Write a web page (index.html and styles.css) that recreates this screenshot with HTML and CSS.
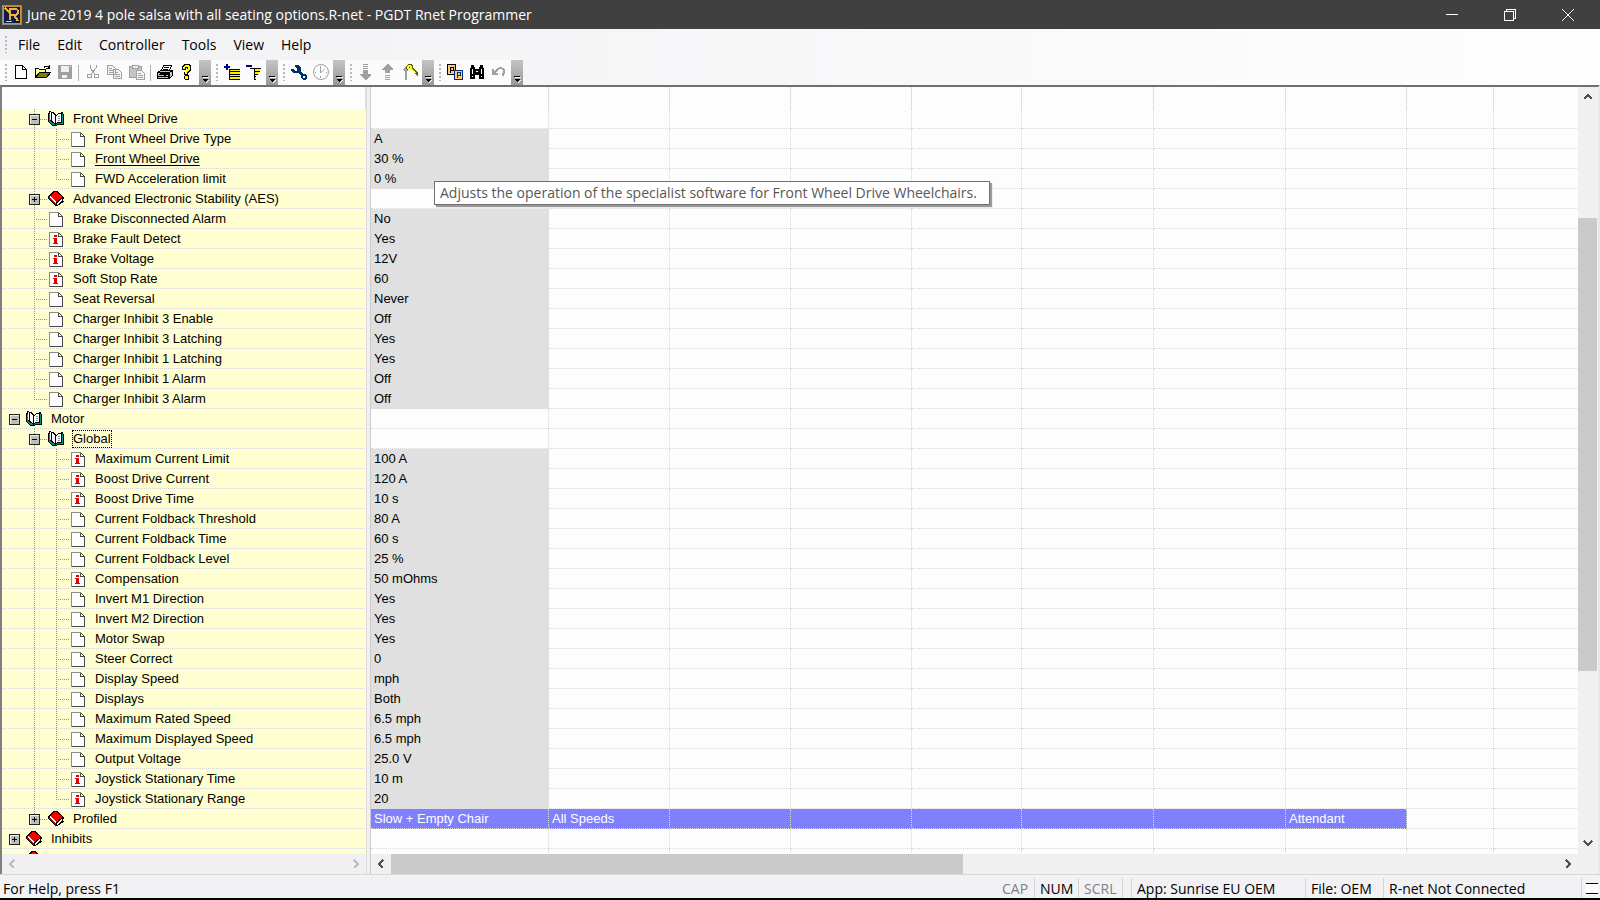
FILE: index.html
```html
<!DOCTYPE html>
<html lang="en">
<head>
  <meta charset="UTF-8" />
  <meta name="viewport" content="width=device-width, initial-scale=1.0"/>
  <title>PGDT Rnet Programmer</title>
  <link rel="stylesheet" href="styles.css">
</head>
<body>
  <!-- shared icons -->
  <svg class="sprite" width="0" height="0">
    <symbol id="i-page" viewBox="0 0 16 16">
      <path d="M1 1h10v1h1v1h1v1h1v1h1v11H1z" fill="#484848"/>
      <path d="M1 1h10v1H2v14H1z" fill="#8c8c8c"/>
      <path d="M2 2h8v4h4v9H2z" fill="#fdfdfd"/>
      <path d="M11 3h1v1h1v1h-2z" fill="#fdfdfd"/>
    </symbol>
    <symbol id="i-info" viewBox="0 0 16 16">
      <use href="#i-page"/>
      <path d="M6 4h3v2H6zM5 7h4v5h1v1H5v-1h1V8H5z" fill="#e00000"/>
    </symbol>
    <symbol id="i-book" viewBox="0 0 16 16">
      <path d="M6 0h3l7 6v1l-1 1v2h1v1l-7 4H7L0 8V5l1-1z" fill="#000"/>
      <path d="M7 1h1l7 5-7 5-6-6z" fill="#f00"/>
      <path d="M1 6l7 6v2L1 8z" fill="#b00000"/>
      <path d="M1 6l7 6v-1L2 5z" fill="#fff"/>
      <path d="M9 12l5-4v2l-5 4z" fill="#fff"/>
    </symbol>
    <symbol id="i-open" viewBox="0 0 16 16">
      <path d="M0 2h1V0h2v1h2l2 2 1 1 2-2h3V1h2v2h1v11H9l-1 1H5l-3-2-2-2z" fill="#000"/>
      <path d="M1 3v8l4 3h3l-6-4V3zM14 3h1v10H9l-1 1v-1l2-1h4z" fill="#009090"/>
      <path d="M2 1l4 2 1 2v7l-3-2-2-1z" fill="#fff"/>
      <path d="M8 5l2-2h3v8h-3l-2 1z" fill="#fff"/>
      <path d="M3 2l1 1v7H3z" fill="#000"/>
      <path d="M10 5h2v1h-2zM10 7h2v1h-2zM10 9h2v1h-2z" fill="#888"/>
    </symbol>
    <symbol id="i-minus" viewBox="0 0 11 11">
      <path d="M0 0h11v11H0z" fill="#222"/><path d="M1 1h9v9H1z" fill="#eee"/><path d="M2 2h8v8H2z" fill="#bdbdbd"/><path d="M3 5h5v1H3z" fill="#000"/>
    </symbol>
    <symbol id="i-plus" viewBox="0 0 11 11">
      <use href="#i-minus"/><path d="M5 3h1v5H5z" fill="#000"/>
    </symbol>
    <symbol id="i-chev" viewBox="0 0 12 12">
      <path d="M2 8l4-4 4 4" fill="none" stroke="currentColor" stroke-width="2"/>
    </symbol>
    <symbol id="i-more" viewBox="0 0 12 25">
      <path d="M3 16h6v1H3z" fill="#000"/><path d="M4 17h6v1H4z" fill="#fff"/>
      <path d="M3 19h6l-3 3z" fill="#000"/><path d="M7 22l3-3v1l-3 3z" fill="#fff"/>
    </symbol>
  </svg>

  <header class="titlebar">
    <svg class="logo" width="20" height="20" viewBox="0 0 20 20">
      <path d="M0 0h20v20H0z" fill="#8c8c84"/><path d="M1 1h18v18H1z" fill="#c89040"/><path d="M2 2h16v16H2z" fill="#101c48"/>
      <path d="M8 15V4h5q3 0 3 3t-3 3H8m4 0l4 6" fill="none" stroke="#f0b040" stroke-width="2"/>
      <path d="M3 3l5 5" fill="none" stroke="#f0b040" stroke-width="2"/>
      <path d="M4 16h6v1H4z" fill="#ccc"/>
    </svg>
    <h1>June 2019 4 pole salsa with all seating options.R-net - PGDT Rnet Programmer</h1>
    <div class="window-buttons">
      <button aria-label="Minimize"><svg width="12" height="12"><path d="M0 5h12v1H0z" fill="#fff"/></svg></button>
      <button aria-label="Restore"><svg width="12" height="12" fill="none" stroke="#fff"><path d="M.5 2.500h9v9h-9zM2.500 2V.5h9v9H10"/></svg></button>
      <button aria-label="Close"><svg class="smooth" width="12" height="12" stroke="#fff"><path d="M0 0l12 12M12 0L0 12"/></svg></button>
    </div>
  </header>

  <div class="bars">
    <nav class="menubar">
      <span class="grip"></span>
      <button>File</button>
      <button>Edit</button>
      <button>Controller</button>
      <button>Tools</button>
      <button>View</button>
      <button>Help</button>
    </nav>

    <div class="toolbars">
      <div class="toolbar">
        <span class="grip"></span>
        <button class="tool" aria-label="New"><svg viewBox="0 0 16 16"><path d="M2.500 1.500h7l4 4v9h-11z" fill="#fff" stroke="#000"/><path d="M9.500 1.500v4h4" fill="none" stroke="#000"/></svg></button>
        <button class="tool" aria-label="Open"><svg viewBox="0 0 16 16"><path d="M.5 13.500v-9h3l1 1h6v3" fill="#ffff90" stroke="#000"/><path d="M.5 13.500l4-5h11l-4 5z" fill="#808000" stroke="#000"/><path d="M9 3.500q2-3 5 0M14.500 1v3.500H11" fill="none" stroke="#000"/></svg></button>
        <button class="tool" aria-label="Save"><svg viewBox="0 0 16 16"><path d="M1 1h14v14H1z" fill="#a0a0a0"/><path d="M4 2h8v6H4zM5 11h5v3H5z" fill="#f0f0f0"/><path d="M13 2h1v1h-1z" fill="#fff"/></svg></button>
        <span class="sep"></span>
        <button class="tool" aria-label="Cut"><svg viewBox="0 0 16 16" fill="none" stroke="#a0a0a0"><path d="M5 1v3l5 6M11 1v3L6 10"/><circle cx="4.500" cy="12" r="2"/><circle cx="11.500" cy="12" r="2"/></svg></button>
        <button class="tool" aria-label="Copy"><svg viewBox="0 0 16 16" fill="#f4f4f4" stroke="#a0a0a0"><path d="M.5 1.500h5l3 3v6h-8zM6.500 5.500h5l3 3v6h-8z"/><path d="M2 4.500h3M2 6.500h4M2 8.500h4M8 8.500h3M8 10.500h5M8 12.500h5"/></svg></button>
        <button class="tool" aria-label="Paste"><svg viewBox="0 0 16 16" stroke="#a0a0a0"><path d="M.5 2.500h12v11H.5z" fill="#c4c4c4"/><path d="M3.500 1.500h6v3h-6z" fill="#eee"/><path d="M7.500 6.500h5l3 3v6h-8z" fill="#f4f4f4"/><path d="M9 9.500h3M9 11.500h5M9 13.500h5"/></svg></button>
        <span class="sep"></span>
        <button class="tool" aria-label="Print"><svg viewBox="0 0 16 16" stroke="#000"><path d="M4.500 6.500l2-5h8l-2 5z" fill="#fff"/><path d="M7 3.500h5M6 5.500h5"/><path d="M.5 8.500l3-2h12v5l-3 3H.5z" fill="#c0c0c0"/><path d="M.5 8.500h12v6M12.500 8.500l3-2M1 12.500h11M2 10.500h8"/><path d="M9 11h2" stroke="#e0d000"/></svg></button>
        <button class="tool" aria-label="Help"><svg viewBox="0 0 16 16"><path d="M3 2l2-2h5l2 2v4l-3 3v2H5V8l3-3V4H7v2H3z" fill="#000"/><path d="M5 12l1-1h3l1 1v3l-1 1H6l-1-1z" fill="#000"/><path d="M4 3l2-2h3l2 2v2L8 8v2H6V7l3-3V3H6v2H4zM6 12h3v3H6z" fill="#ffff00"/></svg></button>
        <button class="more" aria-label="Toolbar options"><svg width="12" height="25"><use href="#i-more"/></svg></button>
      </div>
      <div class="toolbar">
        <span class="grip"></span>
        <button class="tool" aria-label="Add"><svg viewBox="0 0 16 16"><path d="M2 0h2v6H2zM0 2h6v2H0z" fill="#000080"/><path d="M5 5h1v11H5zM5 5h11v1H5zM5 7h11v1H5zM5 10h11v1H5zM5 12h11v1H5zM5 15h11v1H5z" fill="#000"/><path d="M6 6h10v1H6zM6 8h10v2H6zM6 11h10v1H6zM6 13h10v2H6z" fill="#f8f000"/></svg></button>
        <button class="tool" aria-label="Remove"><svg viewBox="0 0 16 16"><path d="M0 1h6v2H0z" fill="#000080"/><path d="M4 4h11v1h-1v3h-2v3h-2v5H8V5H4z" fill="#000"/><path d="M9 5h5v2H9zM9 8h4v2H9zM9 11h2v1H9zM9 13h1v2H9z" fill="#f8f000"/></svg></button>
        <button class="more" aria-label="Toolbar options"><svg width="12" height="25"><use href="#i-more"/></svg></button>
      </div>
      <div class="toolbar">
        <span class="grip"></span>
        <button class="tool" aria-label="Configure"><svg viewBox="0 0 16 16"><path d="M4 1h3l3 3v4l2 2h2l2 2v2l-2 2h-2l-2-2v-2L7 9H3L0 7V5h2l2 2h2V5L4 3z" fill="#003068"/><path d="M12 12h2v2h-2z" fill="#fff"/></svg></button>
        <button class="tool" aria-label="History"><svg class="smooth" viewBox="0 0 16 16" fill="none" stroke="#a0a0a0"><circle cx="8" cy="8" r="7.500"/><path d="M7.500 2v7l4-4M7.500 14v-2M2 8.500h1M13 8.500h1"/></svg></button>
        <button class="more" aria-label="Toolbar options"><svg width="12" height="25"><use href="#i-more"/></svg></button>
      </div>
      <div class="toolbar">
        <span class="grip"></span>
        <button class="tool" aria-label="Read"><svg viewBox="0 0 16 16" fill="#a0a0a0"><path d="M5 0h5v1H5zM5 2h5v1H5zM5 4h5v1H5zM5 6h5v4h3v1l-5 5H7l-5-5v-1h3z"/></svg></button>
        <button class="tool" aria-label="Write"><svg viewBox="0 0 16 16" fill="#a0a0a0"><path d="M5 15h5v1H5zM5 13h5v1H5zM5 11h5v1H5zM5 9h5V6h3V5L8 0H7L2 5v1h3z"/></svg></button>
        <button class="tool" aria-label="Access key"><svg viewBox="0 0 16 16"><path d="M1 5l3-3h3v3L5 8v8H3V8z" fill="#a0a0a0"/><path d="M4 2l2-2h4l1 2v2l5 5v3h-1l-2-3-4-3H6L4 5z" fill="#606000"/><path d="M5 2l1-1h3l1 2v1l4 5h-1L9 6H6L5 4z" fill="#ffff20"/><path d="M7 3h1v1H7z" fill="#444"/></svg></button>
        <button class="more" aria-label="Toolbar options"><svg width="12" height="25"><use href="#i-more"/></svg></button>
      </div>
      <div class="toolbar">
        <span class="grip"></span>
        <button class="tool" aria-label="Parameters"><svg viewBox="0 0 16 16"><path d="M.5 .5h8v10h-8z" fill="#ffc878" stroke="#000"/><path d="M3.500 9V3.500h3v3h-3" fill="none" stroke="#000"/><path d="M7.500 6.500h8v9h-8z" fill="#ffc878" stroke="#003070"/><path d="M10.500 14V8.500h3v3h-3" fill="none" stroke="#003070"/></svg></button>
        <button class="tool" aria-label="Find"><svg viewBox="0 0 16 16"><path d="M2 1h3v2h1v2h4V3h1V1h3v3h1v11h-5v-4H6v4H1V4h1z" fill="#000"/><path d="M3 5h1v5H3zM12 5h1v5h-1zM7 7h2v1H7zM3 12h1v1H3zM12 12h1v1h-1z" fill="#fff"/></svg></button>
        <button class="tool" aria-label="Undo"><svg viewBox="0 0 16 16" fill="none" stroke="#a0a0a0" stroke-width="2"><path d="M2 5v5h5M3 9l4-4q4-2 6 1 1 3-2 6"/></svg></button>
        <button class="more" aria-label="Toolbar options"><svg width="12" height="25"><use href="#i-more"/></svg></button>
      </div>
    </div>
  </div>

  <main class="workspace">
    <section class="tree-pane">
      <div class="tree-head"></div>
      <ul class="tree" id="tree"></ul>
      <div class="hscroll disabled">
        <button aria-label="Scroll left"><svg class="left" width="12" height="12"><use href="#i-chev"/></svg></button>
        <span class="after"></span>
        <button aria-label="Scroll right"><svg class="right" width="12" height="12"><use href="#i-chev"/></svg></button>
      </div>
    </section>
    <div class="splitter"></div>
    <section class="grid-pane">
      <div class="grid-wrap">
        <table class="grid">
          <colgroup>
            <col class="c-value"><col class="c-std"><col class="c-std"><col class="c-std"><col class="c-small"><col class="c-wide"><col class="c-wide"><col class="c-std"><col class="c-thin"><col>
          </colgroup>
          <thead>
            <tr><th></th><th></th><th></th><th></th><th></th><th></th><th></th><th></th><th></th><th></th></tr>
          </thead>
          <tbody id="values"></tbody>
        </table>
      </div>
      <div class="hscroll">
        <button aria-label="Scroll left"><svg class="left" width="12" height="12"><use href="#i-chev"/></svg></button>
        <span class="thumb"></span>
        <span class="after"></span>
        <button aria-label="Scroll right"><svg class="right" width="12" height="12"><use href="#i-chev"/></svg></button>
      </div>
    </section>
    <div class="vscroll">
      <button aria-label="Scroll up"><svg width="12" height="12"><use href="#i-chev"/></svg></button>
      <span class="before"></span>
      <span class="thumb"></span>
      <span class="after"></span>
      <button aria-label="Scroll down"><svg class="down" width="12" height="12"><use href="#i-chev"/></svg></button>
    </div>
    <div class="tooltip" role="tooltip">Adjusts the operation of the specialist software for Front Wheel Drive Wheelchairs.</div>
  </main>

  <footer class="statusbar">
    <span class="message">For Help, press F1</span>
    <span class="key caps off">CAP</span>
    <span class="key">NUM</span>
    <span class="key off">SCRL</span>
    <span class="blank"></span>
    <span class="app">App: Sunrise EU OEM</span>
    <span class="file">File: OEM</span>
    <span class="link">R-net Not Connected</span>
    <svg class="size-grip" width="12" height="12"><path d="M0 0h12v12H0z" fill="#fdfdfd"/><path d="M0 0h12v1H0zM0 10h12v1H0z" fill="#000"/></svg>
  </footer>

  <script src="script.js"></script>
</body>
</html>
```
FILE: styles.css
```css
* {
  box-sizing: border-box;
}

body {
  font-family: "Open Sans", "Noto Sans", sans-serif;
  font-size: 14px;
  margin: 0;
  height: 100vh;
  display: flex;
  flex-direction: column;
  overflow: hidden;
  background: #f2f2f4;
  color: #000;
  border-bottom: 2px solid #000;
}

button {
  font: inherit;
  color: inherit;
  background: none;
  border: none;
  padding: 0;
}

svg {
  display: block;
  flex: none;
  shape-rendering: crispEdges;
}

.smooth {
  shape-rendering: auto;
}

.sprite {
  position: absolute;
}

/* Title bar */
.titlebar {
  display: flex;
  align-items: center;
  height: 29px;
  padding-left: 2px;
  background: #404040;
  color: #fff;
}

.titlebar h1 {
  flex: 1;
  margin: 0 0 0 5px;
  font-size: 14px;
  font-weight: normal;
}

.window-buttons {
  display: flex;
}

.window-buttons button {
  display: flex;
  justify-content: center;
  width: 58px;
  padding-right: 6px;
}

/* Menu and toolbars */
.bars {
  background: linear-gradient(to right, #f1f1f4, #fdfdfd 92%);
}

.menubar {
  display: flex;
  align-items: center;
  height: 31px;
}

.menubar button {
  margin-right: 17px;
}

.grip {
  width: 2px;
  height: 17px;
  margin: 0 3px 0 5px;
  background: repeating-linear-gradient(#b8b8b8 0 2px, transparent 2px 4px);
}

.menubar .grip {
  margin-right: 11px;
}

.toolbars {
  display: flex;
  height: 25px;
}

.toolbar {
  display: flex;
  align-items: center;
  background: #fbfbfc;
}

.tool {
  display: flex;
  justify-content: center;
  width: 22px;
  padding-bottom: 2px;
}

.tool svg {
  width: 16px;
  height: 16px;
}

.sep {
  width: 1px;
  height: 16px;
  margin: 0 3px 0 2px;
  background: #b0b0b0;
}

.more {
  height: 25px;
  margin-left: 1px;
  background: linear-gradient(#c4c4c4, #989898);
}

/* Workspace */
.workspace {
  position: relative;
  flex: 1;
  min-height: 0;
  display: flex;
  border-top: 2px solid #707070;
  border-left: 2px solid #808080;
  border-right: 2px solid #e8e8e8;
  font-family: "Liberation Sans", Arial, sans-serif;
  font-size: 13px;
}

.tree-pane {
  display: flex;
  flex-direction: column;
  width: 364px;
}

.tree-head {
  height: 22px;
  background: #fdfdfd;
  border-right: 1px solid #ddd;
}

.tree {
  flex: 1;
  min-height: 0;
  overflow: hidden;
  margin: 0;
  padding: 0;
  list-style: none;
  background: #fefed0;
}

.tree li {
  display: flex;
  align-items: center;
  height: 20px;
  background: repeating-linear-gradient(to right, #d4d4d4 0 1px, transparent 1px 2px) 0 19px / 100% 1px no-repeat;
}

.tree .label {
  margin-left: 9px;
  line-height: 20px;
}

.tree .hot {
  text-decoration: underline;
  text-underline-offset: 2px;
}

.tree .focused {
  margin-left: 8px;
  line-height: 16px;
  border: 1px dotted #000;
}

/* dotted guide lines in front of a row */
.slot {
  display: flex;
  align-items: center;
  width: 22px;
  height: 20px;
  padding-left: 6px;
  background-repeat: no-repeat;
  background-position: 11px 0, 11px 10px;
}

.slot:first-child {
  width: 21px;
  padding-left: 7px;
}

.slot.joint {
  width: 25px;
}

.slot.joint:first-child {
  width: 24px;
}

.slot.line {
  background-image: repeating-linear-gradient(#909090 0 1px, transparent 1px 2px);
  background-size: 1px 20px;
}

.slot.tee,
.slot.end {
  background-image:
    repeating-linear-gradient(#909090 0 1px, transparent 1px 2px),
    repeating-linear-gradient(to right, #909090 0 1px, transparent 1px 2px);
  background-size: 1px 20px, 14px 1px;
}

.slot.end {
  background-size: 1px 10px, 14px 1px;
}

.splitter {
  width: 5px;
  background: #f0f0f0;
  border-left: 1px solid #ddd;
  border-right: 1px solid #ccc;
}

/* Value grid */
.grid-pane {
  flex: 1;
  min-width: 0;
  display: flex;
  flex-direction: column;
}

.grid-wrap {
  flex: 1;
  min-height: 0;
  overflow: hidden;
  background: #fdfdfd;
}

.grid {
  width: 100%;
  table-layout: fixed;
  border-collapse: separate;
  border-spacing: 0;
}

.c-value { width: 178px; }
.c-std { width: 121px; }
.c-small { width: 110px; }
.c-wide { width: 132px; }
.c-thin { width: 87px; }

.grid th {
  height: 22px;
  padding: 0;
  border-right: 1px solid #ddd;
}

.grid td {
  height: 20px;
  padding: 1px 0 0 3px;
  line-height: 18px;
  white-space: nowrap;
  border-right: 1px dotted #d8d8d8;
  border-bottom: 1px dotted #d8d8d8;
}

.grid th:last-child,
.grid td:last-child {
  border-right: none;
}

.grid td.value {
  background: #e0e0e0;
  border-color: #e0e0e0;
}

.grid td.mode {
  background: #8080ff;
  color: #fff;
}

/* Scroll bars */
.hscroll,
.vscroll {
  display: flex;
  background: #f0f0f2;
  color: #505050;
}

.hscroll {
  height: 20px;
}

.vscroll {
  flex-direction: column;
  width: 20px;
  padding-bottom: 21px;
}

.hscroll button,
.vscroll button {
  display: flex;
  align-items: center;
  justify-content: center;
  width: 20px;
  height: 20px;
}

.disabled {
  color: #bbb;
}

.thumb {
  background: #cacaca;
}

.hscroll .thumb { flex: 49; }
.hscroll .after { flex: 51; }
.vscroll .before { flex: 111; }
.vscroll .thumb { flex: 454; margin-right: 1px; }
.vscroll .after { flex: 162; }

.left { transform: rotate(-90deg); }
.right { transform: rotate(90deg); }
.down { transform: rotate(180deg); }

.tooltip {
  position: absolute;
  left: 432px;
  top: 94px;
  height: 24px;
  padding: 0 12px 0 5px;
  font-family: "Open Sans", "Noto Sans", sans-serif;
  font-size: 14px;
  line-height: 21px;
  color: #575757;
  background: #fff;
  border: 1px solid #707070;
  box-shadow: 2px 2px 1px #999;
}

/* Status bar */
.statusbar {
  display: flex;
  height: 24px;
  padding: 3px 2px 0 3px;
  border-top: 1px solid #d8d8d8;
  line-height: 22px;
  white-space: nowrap;
}

.statusbar span {
  height: 20px;
  padding-left: 5px;
  border-right: 1px solid #d4d4d4;
}

.statusbar .message {
  flex: 1;
  padding-left: 0;
  border-right: none;
}

.statusbar .key { width: 44px; }
.statusbar .caps { width: 38px; }
.statusbar .off { color: #808080; }
.statusbar .blank { width: 9px; }
.statusbar .app { width: 174px; }
.statusbar .file { width: 78px; }
.statusbar .link { width: 198px; }

.size-grip {
  margin: 5px 0 0 4px;
}
```
FILE: script.js
```js
// slots: "-" empty, "|" line, "t" tee, "e" last branch; one letter per level
// fourth item is the value: null for a group, a list for the drive modes
const rows = [
  ["-t", "open", "Front Wheel Drive", null],
  ["-|t", "page", "Front Wheel Drive Type", "A"],
  ["-|t", "page", "Front Wheel Drive", "30 %", "hot"],
  ["-|e", "page", "FWD Acceleration limit", "0 %"],
  ["-t", "book", "Advanced Electronic Stability (AES)", null],
  ["-t", "page", "Brake Disconnected Alarm", "No"],
  ["-t", "info", "Brake Fault Detect", "Yes"],
  ["-t", "info", "Brake Voltage", "12V"],
  ["-t", "info", "Soft Stop Rate", "60"],
  ["-t", "page", "Seat Reversal", "Never"],
  ["-t", "page", "Charger Inhibit 3 Enable", "Off"],
  ["-t", "page", "Charger Inhibit 3 Latching", "Yes"],
  ["-t", "page", "Charger Inhibit 1 Latching", "Yes"],
  ["-t", "page", "Charger Inhibit 1 Alarm", "Off"],
  ["-e", "page", "Charger Inhibit 3 Alarm", "Off"],
  ["-", "open", "Motor", null],
  ["-t", "open", "Global", null, "focused"],
  ["-|t", "info", "Maximum Current Limit", "100 A"],
  ["-|t", "info", "Boost Drive Current", "120 A"],
  ["-|t", "info", "Boost Drive Time", "10 s"],
  ["-|t", "page", "Current Foldback Threshold", "80 A"],
  ["-|t", "page", "Current Foldback Time", "60 s"],
  ["-|t", "page", "Current Foldback Level", "25 %"],
  ["-|t", "info", "Compensation", "50 mOhms"],
  ["-|t", "page", "Invert M1 Direction", "Yes"],
  ["-|t", "page", "Invert M2 Direction", "Yes"],
  ["-|t", "page", "Motor Swap", "Yes"],
  ["-|t", "page", "Steer Correct", "0"],
  ["-|t", "page", "Display Speed", "mph"],
  ["-|t", "page", "Displays", "Both"],
  ["-|t", "page", "Maximum Rated Speed", "6.5 mph"],
  ["-|t", "page", "Maximum Displayed Speed", "6.5 mph"],
  ["-|t", "page", "Output Voltage", "25.0 V"],
  ["-|t", "info", "Joystick Stationary Time", "10 m"],
  ["-|e", "info", "Joystick Stationary Range", "20"],
  ["-e", "book", "Profiled", ["Slow + Empty Chair", "All Speeds", "", "", "", "", "", "Attendant"]],
  ["-", "book", "Inhibits", null],
  ["-", "book", "", null]
];

const slotClass = { "-": "", "|": "line", "t": "tee", "e": "end" };
const columns = 10;

function treeRow([slots, icon, label, value, state]) {
  const group = icon === "open" || icon === "book";
  let html = "";
  [...slots].forEach((s, i) => {
    const last = i === slots.length - 1;
    const toggle = last && group
      ? `<button aria-label="Toggle ${label}"><svg width="11" height="11"><use href="#${icon === "open" ? "i-minus" : "i-plus"}"/></svg></button>`
      : "";
    html += `<span class="slot ${slotClass[s]} ${last ? "joint" : ""}">${toggle}</span>`;
  });
  return `<li>${html}<svg width="16" height="16"><use href="#i-${icon}"/></svg><span class="label ${state || ""}">${label}</span></li>`;
}

function gridRow([, , , value]) {
  let html = "";
  for (let i = 0; i < columns; i++) {
    if (Array.isArray(value) && i < value.length) {
      html += `<td class="mode">${value[i]}</td>`;
    } else if (typeof value === "string" && i === 0) {
      html += `<td class="value">${value}</td>`;
    } else {
      html += "<td></td>";
    }
  }
  return `<tr>${html}</tr>`;
}

document.getElementById("tree").innerHTML = rows.map(treeRow).join("");
document.getElementById("values").innerHTML = rows.map(gridRow).join("");
```
